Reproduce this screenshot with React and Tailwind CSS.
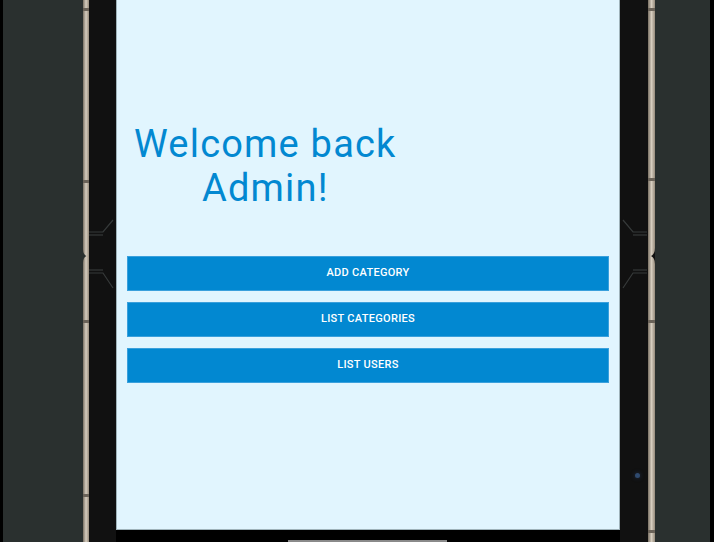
import React from "react";

const actions = ["Add Category", "List Categories", "List Users"];

// thin metallic phone edge, with a few darker antenna bands
const Edge = ({ bands, notch, flip }) => (
  <div className="relative h-full w-full bg-gradient-to-r from-[#7a7164] via-[#d6cdbf] to-[#968b7c]">
    {bands.map((y) => (
      <div key={y} className="absolute left-0 h-[3px] w-full bg-[#6a6258]" style={{ top: y }} />
    ))}
    <svg className="absolute left-0 w-full" style={{ top: notch - 8 }} width="7" height="16" viewBox="0 0 7 16">
      {flip ? (
        <path d="M7 0 Q7 6 3 8 Q7 10 7 16 Z" fill="#111" />
      ) : (
        <path d="M0 0 Q0 6 4 8 Q0 10 0 16 Z" fill="#2a302f" />
      )}
    </svg>
  </div>
);

// side button outline drawn on the bezel
const Hinge = ({ flip }) => (
  <svg
    className={"absolute left-0 top-[218px] " + (flip ? "-scale-x-100" : "")}
    width="27"
    height="80"
    viewBox="0 0 27 80"
    fill="none"
    stroke="#363a3a"
    strokeWidth="1.2"
  >
    <path d="M0 14 H14 L24 2" />
    <path d="M0 17 H14" />
    <path d="M0 52 H14" />
    <path d="M0 55 H14 L24 70" />
  </svg>
);

export default function App() {
  return (
    <div className="flex h-[542px] w-[714px] overflow-hidden bg-black font-['Roboto',sans-serif]">
      <div className="w-[3px] shrink-0 bg-black" />
      <div className="w-[80px] shrink-0 bg-[#2a302f]" />
      <div className="w-[6px] shrink-0">
        <Edge bands={[8, 180, 320, 494]} notch={256} />
      </div>
      <div className="relative w-[27px] shrink-0 bg-[#111111]">
        <Hinge />
      </div>

      {/* screen */}
      <div className="flex w-[504px] shrink-0 flex-col">
        <div className="flex h-[530px] flex-col border-b border-l border-r border-[#9fb3ba] bg-[#e1f5fe]">
          <div className="mt-[122px] w-fit pl-[17px] text-center text-[38px] leading-[44px] tracking-[1.2px] text-[#0288d1]">
            <div>Welcome back</div>
            <div>Admin!</div>
          </div>

          <div className="mt-[46px] flex flex-col gap-[11px] px-[10px]">
            {actions.map((label) => (
              <button
                key={label}
                className="h-[35px] w-full border border-[#3aa0dc] bg-[#0288d1] text-[11px] font-medium uppercase tracking-[0.3px] text-white"
              >
                {label}
              </button>
            ))}
          </div>
        </div>
        <div className="relative h-[12px] bg-black">
          <div className="absolute bottom-0 left-[172px] h-[2px] w-[159px] bg-[#8a8a8a]" />
        </div>
      </div>

      <div className="relative w-[28px] shrink-0 bg-[#111111]">
        <Hinge flip />
        <div className="absolute left-[15px] top-[473px] h-[5px] w-[5px] rounded-full bg-[#2f4a6e] shadow-[0_0_4px_#22304a]" />
      </div>
      <div className="w-[7px] shrink-0">
        <Edge bands={[8, 178, 320, 530]} notch={256} flip />
      </div>
      <div className="w-[55px] shrink-0 bg-[#2a302f]" />
      <div className="w-[4px] shrink-0 bg-black" />
    </div>
  );
}
